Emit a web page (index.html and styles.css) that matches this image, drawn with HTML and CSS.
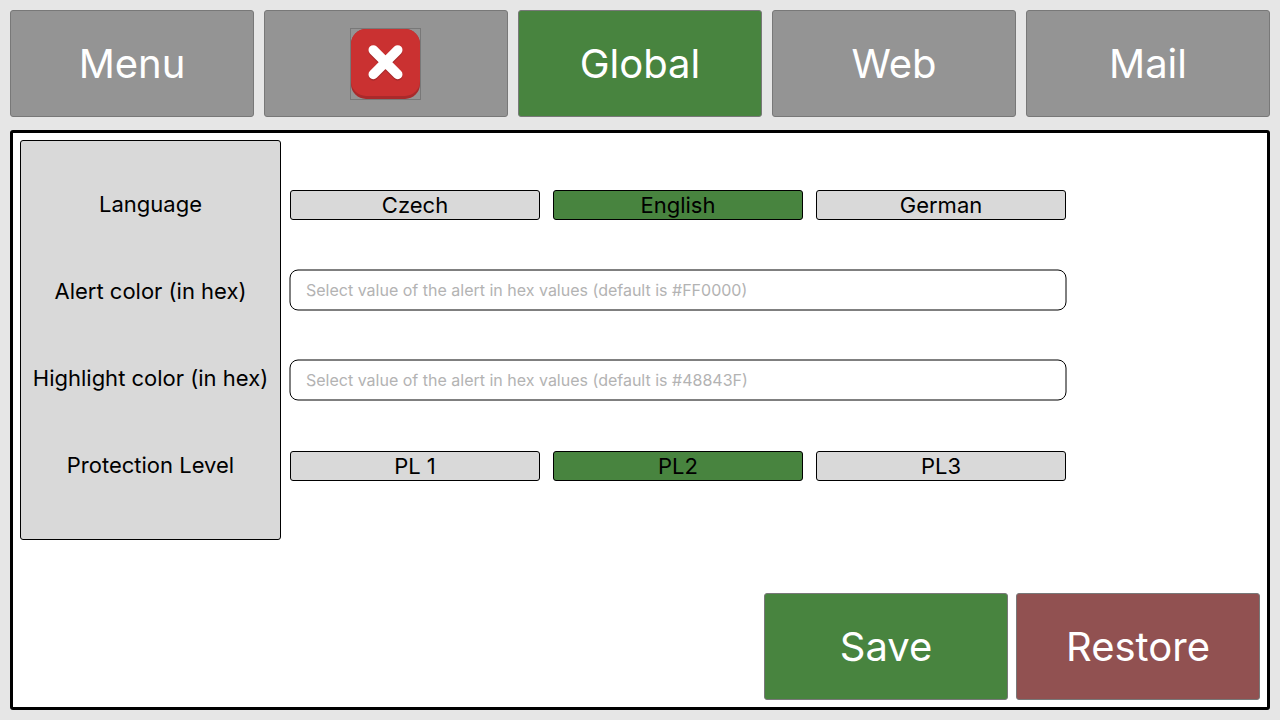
FILE: index.html
```html
<!DOCTYPE html>
<html lang="en">
<head>
<meta charset="utf-8">
<title>Global settings</title>
<link rel="stylesheet" href="styles.css">
</head>
<body>
<nav class="tabs">
  <button class="big">Menu</button>
  <button class="big" aria-label="Close">
    <svg class="close" width="71" height="72" viewBox="0 0 71 72">
      <rect x="1" y="1" width="69" height="70" rx="15" fill="#a92a2b"/>
      <rect x="1" y="1" width="69" height="67" rx="15" fill="#ca3131"/>
      <path d="M23.300 22L47.700 46.400M47.700 22L23.300 46.400" transform="translate(0 1.500)" stroke="#a92a2b" stroke-width="9.600" stroke-linecap="round"/>
      <path d="M23.300 22L47.700 46.400M47.700 22L23.300 46.400" stroke="#fff" stroke-width="9.600" stroke-linecap="round"/>
      <rect x=".5" y=".5" width="70" height="71" fill="none" stroke="#787878"/>
    </svg>
  </button>
  <button class="big green">Global</button>
  <button class="big">Web</button>
  <button class="big">Mail</button>
</nav>
<main class="panel">
  <div class="settings">
    <div class="labels">
      <div>Language</div>
      <div>Alert color (in hex)</div>
      <div>Highlight color (in hex)</div>
      <div>Protection Level</div>
    </div>
    <div class="controls">
      <div class="options">
        <button class="option">Czech</button>
        <button class="option green">English</button>
        <button class="option">German</button>
      </div>
      <div class="field">
        <svg class="frame" width="778" height="42"><rect x="1" y="1" width="776" height="40" rx="8" fill="#fff" stroke="#000"/></svg>
        <input class="hex" placeholder="Select value of the alert in hex values (default is #FF0000)">
      </div>
      <div class="field second">
        <svg class="frame" width="778" height="42"><rect x="1" y="1" width="776" height="40" rx="8" fill="#fff" stroke="#000"/></svg>
        <input class="hex" placeholder="Select value of the alert in hex values (default is #48843F)">
      </div>
      <div class="options">
        <button class="option">PL 1</button>
        <button class="option green">PL2</button>
        <button class="option">PL3</button>
      </div>
    </div>
  </div>
  <div class="actions">
    <button class="big green">Save</button>
    <button class="big red">Restore</button>
  </div>
</main>
</body>
</html>
```

FILE: styles.css
```css
* { box-sizing: border-box; }
body {
  margin: 0;
  width: 1280px;
  height: 720px;
  padding: 10px;
  background: #e6e6e6;
  font-family: Inter, sans-serif;
  overflow: hidden;
}
button { font-family: inherit; padding: 0; margin: 0; }
.tabs { display: flex; gap: 10px; }
.big {
  display: flex;
  align-items: center;
  justify-content: center;
  width: 244px;
  height: 107px;
  border: 1px solid #787878;
  border-radius: 3px;
  background: #949494;
  color: #fff;
  font-size: 40px;
  font-weight: 400;
}
.close { display: block; margin: 1px 1px 0 0; }
.green { background: #48843f; }
.red { background: #915151; }
.panel {
  display: flex;
  flex-direction: column;
  justify-content: space-between;
  height: 580px;
  margin-top: 13px;
  padding: 7px;
  border: 3px solid #000;
  border-radius: 3px;
  background: #fff;
}
.settings { display: flex; gap: 8px; }
.labels {
  width: 261px;
  height: 400px;
  padding-top: 20px;
  border: 1px solid #000;
  border-radius: 3px;
  background: #d9d9d9;
  font-size: 22px;
  line-height: 87px;
  text-align: center;
  white-space: nowrap;
}
.controls { width: 778px; padding-top: 50px; }
.options { display: flex; gap: 13px; padding-left: 1px; }
.option {
  width: 250px;
  height: 30px;
  border: 1px solid #000;
  border-radius: 3px;
  background: #d9d9d9;
  color: #000;
  font-size: 22px;
  line-height: 28px;
}
.option.green { background: #48843f; }
.field { position: relative; height: 42px; margin-top: 49px; }
.field.second { margin-top: 48px; margin-bottom: 50px; }
.frame { position: absolute; left: 0; top: 0; }
.hex {
  position: relative;
  display: block;
  width: 778px;
  height: 42px;
  padding: 0 17px;
  border: 0;
  background: transparent;
  font: 16px Inter, sans-serif;
}
.hex::placeholder { color: #b3b3b3; opacity: 1; }
.actions { display: flex; gap: 8px; justify-content: flex-end; }
```
